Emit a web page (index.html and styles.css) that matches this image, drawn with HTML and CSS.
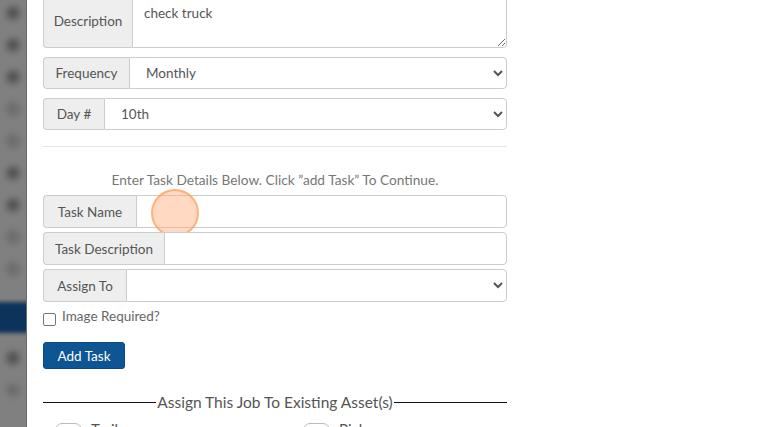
FILE: index.html
```html
<!DOCTYPE html>
<html>
<head>
<meta charset="utf-8">
<link rel="stylesheet" href="styles.css">
</head>
<body>
<div class="page">
  <div class="sidebar">
    <div class="blob"></div><div class="blob"></div><div class="blob"></div><div class="blob light"></div>
    <div class="blob light"></div><div class="blob"></div><div class="blob"></div><div class="blob light"></div>
    <div class="blob light"></div>
    <div class="active"></div>
    <div class="blob"></div><div class="blob light"></div>
  </div>
  <div class="modal">
    <div class="content">
      <div class="group group-tall">
        <span class="addon w-desc">Description</span>
        <textarea class="control textarea">check truck</textarea>
      </div>
      <div class="group gap-lg">
        <span class="addon w-freq">Frequency</span>
        <select class="control select"><option>Monthly</option></select>
      </div>
      <div class="group gap-lg">
        <span class="addon w-day">Day #</span>
        <select class="control select"><option>10th</option></select>
      </div>
      <hr class="divider">
      <p class="hint">Enter Task Details Below. Click ”add Task” To Continue.</p>
      <div class="group task-group">
        <span class="addon w-tname">Task Name</span>
        <input class="control input" type="text">
        <span class="cursor-dot"></span>
      </div>
      <div class="group task-group gap-sm">
        <span class="addon w-tdesc">Task Description</span>
        <input class="control input" type="text">
      </div>
      <div class="group task-group gap-sm">
        <span class="addon w-assign">Assign To</span>
        <select class="control select"><option></option></select>
      </div>
      <label class="check"><span class="box"></span><span>Image Required?</span></label>
      <button class="btn">Add Task</button>
      <div class="legend"><span class="rule"></span><span class="legend-text">Assign This Job To Existing Asset(s)</span><span class="rule"></span></div>
      <div class="assets">
        <div class="asset"><span class="toggle"></span><span>Trailer</span></div>
        <div class="asset"><span class="toggle"></span><span>Pickup</span></div>
      </div>
    </div>
  </div>
</div>
</body>
</html>
```

FILE: styles.css
```css
* { box-sizing: border-box; }
html, body { margin: 0; padding: 0; height: 100%; overflow: hidden; background: #fff; }
body { font-family: "Lato", "Open Sans", sans-serif; font-size: 13.5px; color: #555; }
.page { display: flex; height: 427px; overflow: hidden; }
.sidebar {
  width: 27px; flex: none; background: #808080; border-right: 1px solid #6a6a6a;
  display: flex; flex-direction: column; align-items: center; padding-top: 6px; gap: 18px; overflow: hidden;
}
.blob { width: 14px; height: 14px; border-radius: 50%; background: #555; filter: blur(3px); flex: none; }
.blob.light { background: #6c6c6c; }
.active { width: 40px; height: 31px; background: #0c3359; flex: none; filter: blur(2px); margin: 8px -8px 0; }
.modal { flex: 1; background: #fff; }
.content { width: 464px; margin-left: 16px; margin-top: -6px; }
.group { display: flex; height: 32px; }
.group-tall { height: 54px; }
.gap-lg { margin-top: 9px; }
.gap-sm { margin-top: 4px; }
.addon {
  display: flex; align-items: center; justify-content: center; padding: 0 4px; background: #eee;
  border: 1px solid #ccc; border-right: 0; border-radius: 4px 0 0 4px; color: #555; white-space: nowrap; flex: none;
}
.w-desc { width: 89px; }
.w-freq { width: 86px; }
.w-day { width: 61px; }
.w-tname { width: 93px; }
.w-tdesc { width: 121px; }
.w-assign { width: 83px; }
.control {
  flex: 1; min-width: 0; border: 1px solid #ccc; border-radius: 0 4px 4px 0; background: #fff;
  font-family: inherit; font-size: 13.5px; color: #555; margin: 0;
}
.textarea { padding: 10px 11px 4px; resize: vertical; line-height: 1.2; }
.select { padding: 0 8px 0 12px; }
.input { padding: 0 12px; }
.divider { border: 0; border-top: 1px solid #e6e6e6; margin: 16px 0 0; height: 0; }
.hint { text-align: center; color: #777; margin: 25px 0 7px; font-size: 13.7px; line-height: 16px; }
.task-group { position: relative; height: 33px; }
.cursor-dot {
  position: absolute; left: 108px; top: -6px; width: 48px; height: 48px; border-radius: 50%;
  background: rgba(255, 170, 120, 0.45); border: 2px solid rgba(255, 160, 90, 0.7);
}
.check { display: flex; align-items: flex-start; gap: 6px; margin-top: 7px; color: #666; line-height: 14px; }
.box { width: 13px; height: 13px; border: 1px solid #767676; border-radius: 2px; margin-top: 4px; flex: none; }
.btn {
  display: block; margin-top: 16px; height: 27px; width: 82px; background: #0e5594; color: #fff;
  border: 1px solid #0b4a80; border-radius: 3px; font-family: inherit; font-size: 13.5px; padding: 0;
}
.legend { display: flex; align-items: center; margin-top: 24px; color: #555; font-size: 15.5px; line-height: 18px; }
.rule { flex: 1; height: 1px; background: #111; }
.legend-text { padding: 0 1px; }
.assets { display: flex; margin-top: 9px; padding-left: 12px; }
.asset { display: flex; align-items: flex-start; gap: 9px; width: 248px; flex: none; font-size: 15px; line-height: 18px; }
.toggle { width: 27px; height: 14px; border: 1px solid #bbb; border-radius: 8px; margin-top: 3px; }
```
